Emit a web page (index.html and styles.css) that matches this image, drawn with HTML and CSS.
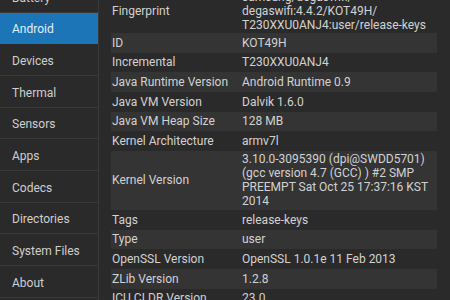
FILE: index.html
```html
<!DOCTYPE html>
<html lang="en">
<head>
    <meta charset="UTF-8">
    <title>Device Info - Android</title>
    <link rel="stylesheet" href="styles.css">
</head>
<body>

<div class="app">
    <nav class="sidebar">
        <ul class="menu">
            <li>Battery</li>
            <li class="active">Android</li>
            <li>Devices</li>
            <li>Thermal</li>
            <li>Sensors</li>
            <li>Apps</li>
            <li>Codecs</li>
            <li>Directories</li>
            <li>System Files</li>
            <li>About</li>
        </ul>
    </nav>

    <main class="content">
        <div class="info-list">
            <div class="row">
                <div class="label">Fingerprint</div>
                <div class="value">samsung/degaswifi/<br>degaswifi:4.4.2/KOT49H/<br>T230XXU0ANJ4:user/release-keys</div>
            </div>
            <div class="row">
                <div class="label">ID</div>
                <div class="value">KOT49H</div>
            </div>
            <div class="row">
                <div class="label">Incremental</div>
                <div class="value">T230XXU0ANJ4</div>
            </div>
            <div class="row">
                <div class="label">Java Runtime Version</div>
                <div class="value">Android Runtime 0.9</div>
            </div>
            <div class="row">
                <div class="label">Java VM Version</div>
                <div class="value">Dalvik 1.6.0</div>
            </div>
            <div class="row">
                <div class="label">Java VM Heap Size</div>
                <div class="value">128 MB</div>
            </div>
            <div class="row">
                <div class="label">Kernel Architecture</div>
                <div class="value">armv7l</div>
            </div>
            <div class="row">
                <div class="label">Kernel Version</div>
                <div class="value">3.10.0-3095390 (dpi@SWDD5701) (gcc version 4.7 (GCC) ) #2 SMP PREEMPT Sat Oct 25 17:37:16 KST 2014</div>
            </div>
            <div class="row">
                <div class="label">Tags</div>
                <div class="value">release-keys</div>
            </div>
            <div class="row">
                <div class="label">Type</div>
                <div class="value">user</div>
            </div>
            <div class="row">
                <div class="label">OpenSSL Version</div>
                <div class="value">OpenSSL 1.0.1e 11 Feb 2013</div>
            </div>
            <div class="row">
                <div class="label">ZLib Version</div>
                <div class="value">1.2.8</div>
            </div>
            <div class="row">
                <div class="label">ICU CLDR Version</div>
                <div class="value">23.0</div>
            </div>
        </div>
    </main>
</div>

</body>
</html>
```

FILE: styles.css
```css
body {
    margin: 0;
    padding: 0;
    background-color: #2a2a2a;
    color: #d2d2d2;
    font-family: Roboto, "Noto Sans", sans-serif;
    font-size: 12px;
}
.app {
    display: flex;
    height: 300px;
    overflow: hidden;
}

/* Left menu */
.sidebar {
    width: 98px;
    flex-shrink: 0;
    border-right: 1px solid #3a3a3a;
    overflow: hidden;
}
.menu {
    list-style-type: none;
    margin: -19px 0 0 0;
    padding: 0;
}
.menu li {
    box-sizing: border-box;
    height: 31.67px;
    display: flex;
    align-items: center;
    padding: 3px 0 0 12px;
    border-bottom: 1px solid #393939;
    color: #cfcfcf;
    font-size: 12px;
}
.menu li.active {
    background-color: #1b75b6;
    color: #e4eef6;
    border-bottom-color: #1b75b6;
}

/* Info table */
.content {
    flex: 1;
    padding: 0 13px 0 12px;
    overflow: hidden;
}
.info-list {
    margin-top: -12px;
}
.row {
    display: flex;
    align-items: center;
    min-height: 19.67px;
    box-sizing: border-box;
    padding: 1.5px 0;
    line-height: 14px;
}
.row:nth-child(even) {
    background-color: #343434;
}
.label {
    width: 130px;
    flex-shrink: 0;
    padding-left: 1px;
}
.value {
    flex: 1;
}
```
